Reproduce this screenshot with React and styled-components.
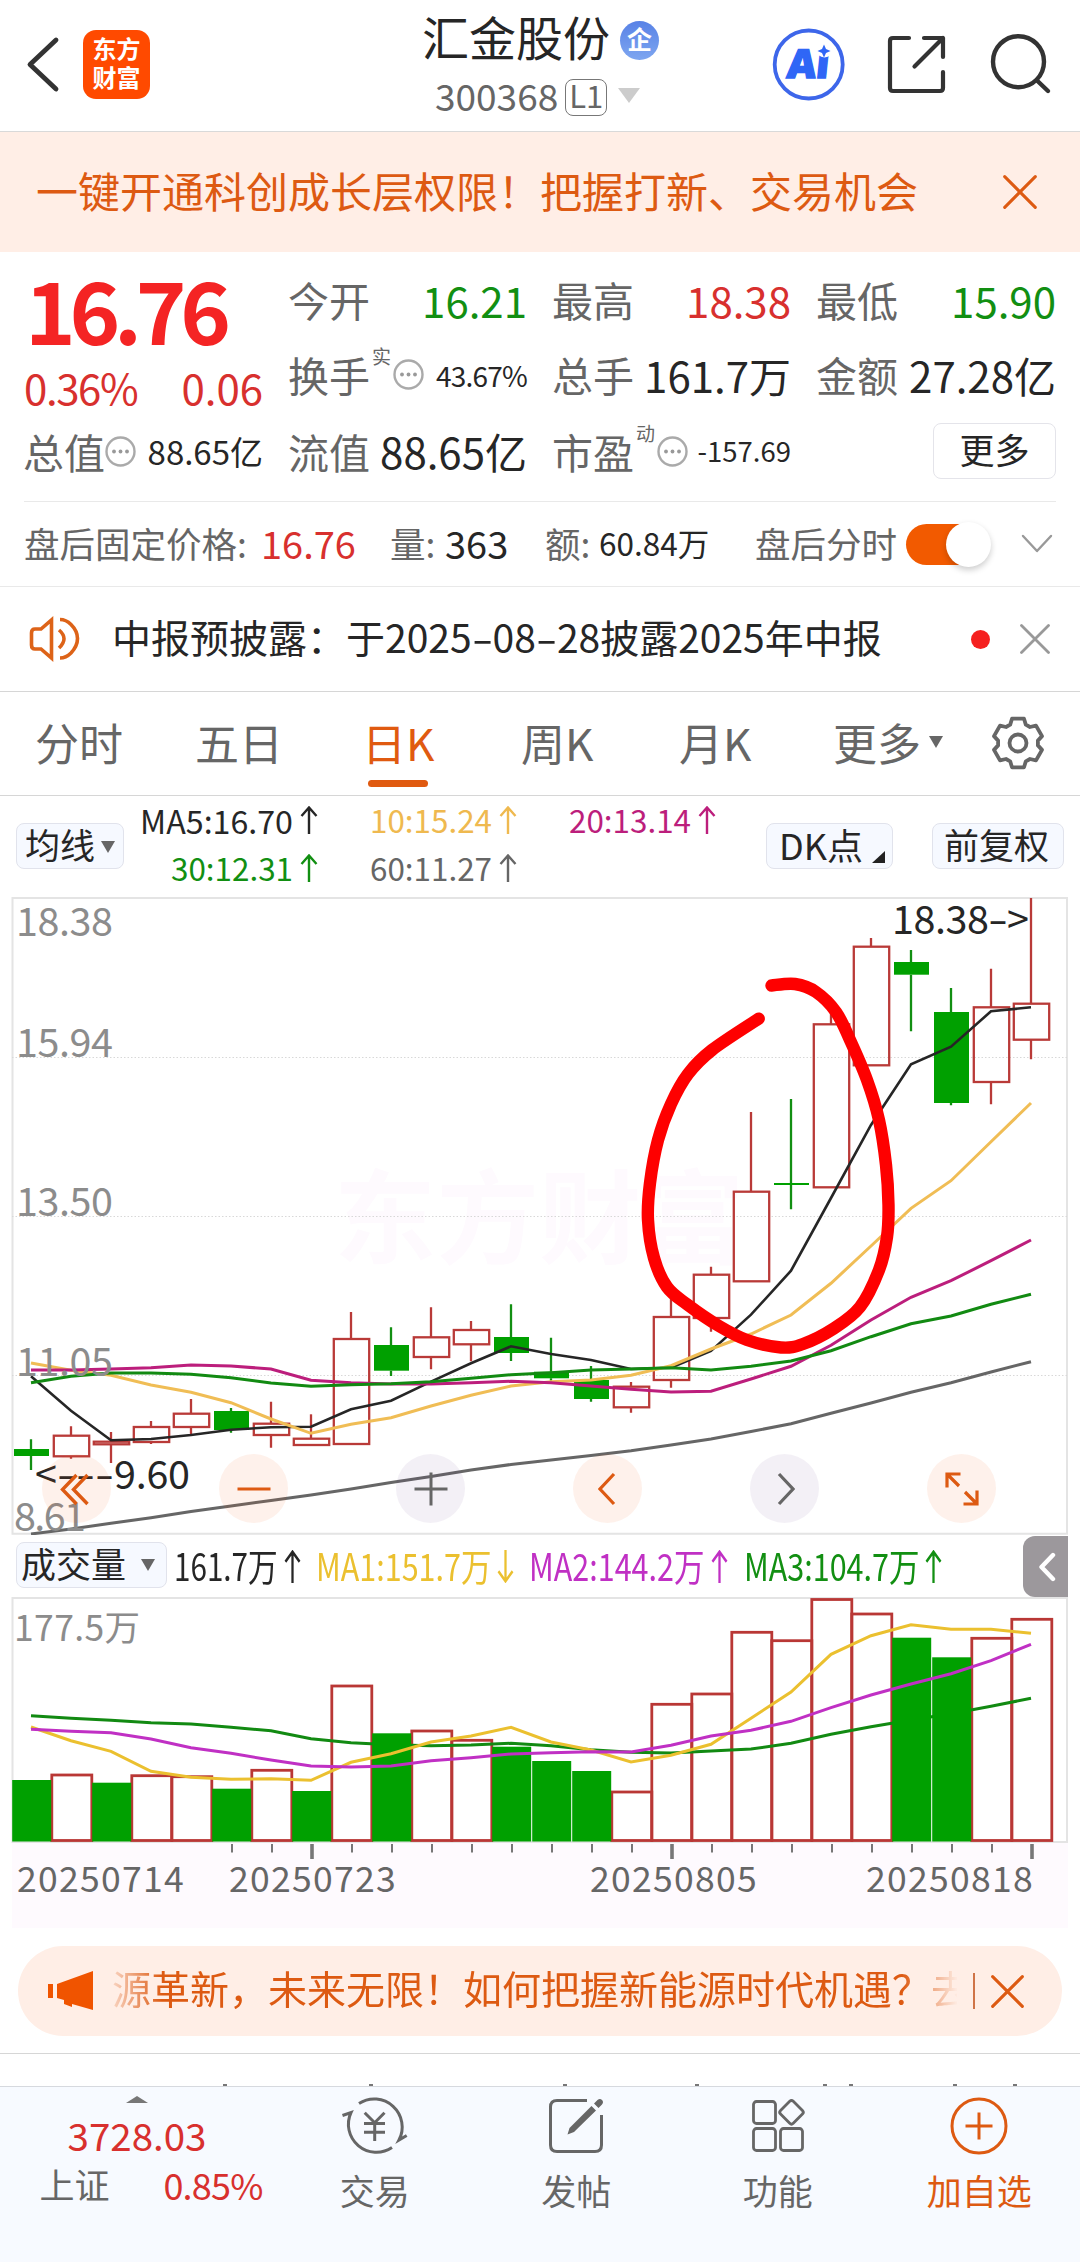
import React from "react";
import styled, { createGlobalStyle } from "styled-components";

const RED = "#d8302e";
const GREEN = "#128f12";
const ORANGE = "#dd5a12";
const GREY = "#666";
const DARK = "#262626";

const GlobalStyle = createGlobalStyle`
  * { box-sizing: border-box; }
  body {
    margin: 0;
    background: #fff;
    font-family: "Noto Sans CJK SC", sans-serif;
    color: ${DARK};
  }
  svg { display: block; flex: none; }
`;

const Page = styled.div`
  width: 1080px;
  height: 2262px;
  overflow: hidden;
`;

const Text = styled.span`
  white-space: nowrap;
  line-height: 1;
  font-size: ${p => p.$size || 42}px;
  color: ${p => p.$color || DARK};
  letter-spacing: ${p => p.$ls || 0}px;
`;

const Icon = styled.svg`
  fill: none;
  stroke: ${p => p.$color || "#333"};
  stroke-width: ${p => p.$width || 4};
  stroke-linecap: ${p => p.$cap || "round"};
  stroke-linejoin: ${p => (p.$cap === "butt" ? "miter" : "round")};
`;

const Cross = ({ size, color, width, className }) => (
  <Icon className={className} width={size} height={size} viewBox="0 0 30 30" $color={color} $width={width}>
    <path d="M1.5 1.5 28.5 28.5M28.5 1.5 1.5 28.5" />
  </Icon>
);

const Caret = styled.i`
  display: block;
  flex: none;
  margin: ${p => p.$top || 0}px 0 0 ${p => p.$left || 0}px;
  border: solid transparent;
  border-width: ${p => p.$h}px ${p => p.$w / 2}px 0;
  border-top-color: ${p => p.$color || GREY};
`;

/* ---------- header ---------- */

const Header = styled.header`
  height: 132px;
  display: grid;
  grid-template-columns: 84px 341px 347px 1fr;
  border-bottom: 1px solid #d9d9d9;
`;

const BackButton = styled.div`
  padding: 36px 0 0 25px;
`;

const Logo = styled.div`
  width: 67px;
  height: 69px;
  margin: 30px 0 0 -1px;
  padding-top: 3px;
  border-radius: 13px;
  background: #ff4a00;
  color: #fff;
  font-size: 24px;
  font-weight: 700;
  line-height: 29px;
  text-align: center;
`;

const TitleBlock = styled.div`
  padding-top: 10px;
`;

const TitleRow = styled.div`
  display: flex;
  align-items: center;
  height: 50px;
  margin-left: -3px;
`;

const CodeRow = styled.div`
  display: flex;
  align-items: center;
  height: 50px;
  margin-top: 10px;
  padding-left: 10px;
`;

const Badge = styled.span`
  width: 39px;
  height: 39px;
  margin: 11px 0 0 10px;
  border-radius: 50%;
  background: linear-gradient(#5882e6, #7ea6f0);
  color: #fff;
  font-size: 25px;
  font-weight: 700;
  line-height: 35px;
  text-align: center;
`;

const Level = styled.span`
  width: 42px;
  height: 37px;
  margin: 5px 11px 0 7px;
  border: 1.5px solid #777;
  border-radius: 8px;
  color: ${GREY};
  font-size: 31px;
  line-height: 30px;
  text-align: center;
`;

const Actions = styled.div`
  display: flex;
  padding-top: 28px;
`;

/* ---------- banner ---------- */

const Banner = styled.div`
  height: 120px;
  padding: 0 43px 4px 36px;
  display: flex;
  align-items: center;
  justify-content: space-between;
  background: #ffeee6;

  svg { margin-top: 3px; }
`;

/* ---------- quote ---------- */

const Quote = styled.section`
  height: 250px;
  margin: 0 24px;
  padding-top: 10px;
  display: grid;
  grid-template-columns: 239px 238px 238px 239px;
  grid-template-rows: 75px 75px 78px;
  column-gap: 26px;
  border-bottom: 1px solid #e9e9e9;
`;

const Cell = styled.div`
  display: flex;
  align-items: center;
  justify-content: space-between;
  padding-top: ${p => p.$drop || 0}px;
`;

const CellLabel = styled.span`
  display: flex;
  align-items: center;
  margin-left: -1px;
  color: ${GREY};
  font-size: 41px;
  line-height: 1;
  white-space: nowrap;
`;

const BigPrice = styled.span`
  margin-left: 1px;
  color: #f42424;
  font-size: 86px;
  font-weight: 700;
  letter-spacing: -6.2px;
  line-height: 1;
`;

const Mark = styled.sup`
  width: 20px;
  font-size: 19px;
  line-height: 20px;
  align-self: flex-start;
  margin: -8px 1px 0 2px;
  vertical-align: baseline;
`;

const MoreButton = styled.button`
  width: 123px;
  height: 56px;
  margin: 0 0 0 auto;
  padding: 0 0 5px;
  border: 1.5px solid #e4e4ea;
  border-radius: 8px;
  background: #fff;
  color: ${DARK};
  font: 35px/1 "Noto Sans CJK SC", sans-serif;
`;

const Dots = () => (
  <svg width="31" height="31" viewBox="0 0 31 31">
    <circle cx="15.5" cy="15.5" r="14" fill="none" stroke="#aaa" strokeWidth="2.4" />
    {[9, 15.5, 22].map(x => (
      <circle key={x} cx={x} cy="15.5" r="1.9" fill="#999" />
    ))}
  </svg>
);

const Field = ({ label, value, color, size, ls, mark, dots }) => (
  <Cell>
    <CellLabel>
      {label}
      {mark && <Mark>{mark}</Mark>}
      {dots && <Dots />}
    </CellLabel>
    <Text $size={size || 42} $color={color} $ls={ls}>
      {value}
    </Text>
  </Cell>
);

const AfterHours = styled.div`
  height: 85px;
  padding: 0 27px 3px 24px;
  display: grid;
  grid-template-columns: 237px 129px 55px 100px 54px 156px 151px 84px 1fr;
  align-items: center;
  border-bottom: 1px solid #e9e9e9;
`;

const Toggle = styled.div`
  width: 82px;
  height: 41px;
  margin-top: 3px;
  display: flex;
  align-items: center;
  justify-content: flex-end;
  border-radius: 21px;
  background: #f25a00;
`;

const Knob = styled.div`
  width: 45px;
  height: 45px;
  margin-right: -3px;
  flex: none;
  border-radius: 50%;
  background: #fff;
  box-shadow: 0 3px 6px rgba(0, 0, 0, 0.2);
`;

const Expand = styled(Icon)`
  justify-self: end;
`;

const Notice = styled.div`
  height: 105px;
  padding: 0 30px 0 29px;
  display: flex;
  align-items: center;
  border-bottom: 1px solid #d6d6d6;
`;

const NoticeText = styled(Text)`
  width: 859px;
  margin: -6px 0 0 31px;

  span {
    display: inline-block;
    width: 21px;
    text-align: center;
    transform: scaleX(1.6);
  }
`;

const RedDot = styled.i`
  width: 19px;
  height: 19px;
  margin-right: 30px;
  border-radius: 50%;
  background: #f5201f;
`;

/* ---------- tabs ---------- */

const Tabs = styled.nav`
  height: 104px;
  padding-left: 35px;
  display: grid;
  grid-template-columns: 160px 167px 159px 158px 154px 158px 1fr;
  border-bottom: 1px solid #d6d6d6;
`;

const Tab = styled.div`
  display: flex;
  align-items: center;
  padding-bottom: 4px;
  color: ${p => (p.$active ? "#e05a10" : GREY)};
  font-size: 44px;
  line-height: 1;
  position: relative;

  &::after {
    content: "";
    display: ${p => (p.$active ? "block" : "none")};
    position: absolute;
    left: 6px;
    bottom: 8px;
    width: 60px;
    height: 7px;
    border-radius: 4px;
    background: #e05a10;
  }

  svg { margin-top: 3px; }
`;

/* ---------- indicator rows ---------- */

const MaRow = styled.div`
  height: 101px;
  padding: 0 16px;
  display: grid;
  grid-template-columns: 124px 626px 166px 1fr;
`;

const Chip = styled.div`
  width: ${p => p.$w}px;
  height: 46px;
  margin-top: ${p => p.$top}px;
  padding: 0 0 5px ${p => p.$pad}px;
  display: flex;
  align-items: center;
  gap: ${p => p.$gap || 0}px;
  border: 1.5px solid #e1e3ec;
  border-radius: 8px;
  background: #f6f9ff;
  font-size: ${p => p.$size || 35}px;
  line-height: 1;
  white-space: nowrap;
`;

const Corner = styled.i`
  align-self: flex-end;
  border: solid transparent;
  border-width: 0 0 12px 13px;
  border-bottom-color: #222;
`;

const MaGrid = styled.div`
  display: grid;
  grid-template-columns: 178px 199px 199px;
  grid-template-rows: 48px 48px;
  align-items: center;
`;

const MaItem = styled.span`
  display: flex;
  align-items: center;
  justify-content: flex-end;
  gap: 7px;
  color: ${p => p.$color};
  font-size: ${p => p.$size || 31.4}px;
  line-height: 1;
  white-space: nowrap;
`;

const Arrow = ({ w = 18, h = 28, down }) => (
  <svg width={w} height={h} viewBox="0 0 18 28" preserveAspectRatio="none" fill="none" stroke="currentColor" strokeWidth="2.4">
    <path d={down ? "M9 0V26M1.5 18 9 26.5 16.5 18" : "M9 28V2M1.5 10 9 1.5 16.5 10"} />
  </svg>
);

const VolHead = styled.div`
  height: 62px;
  padding-left: 16px;
  display: grid;
  grid-template-columns: 158px 142px 213px 215px 279px 45px;
`;

const VolItem = styled.div`
  display: flex;
  align-items: center;
  padding-bottom: 3px;
  color: ${p => p.$color};

  svg { margin-top: 3px; }
`;

/* the figures of this row are set narrow */
const Narrow = styled.span`
  width: ${p => p.$w}px;
  font-size: 38px;
  line-height: 1;
  white-space: nowrap;
  transform: scaleX(${p => p.$x || 0.803});
  transform-origin: 0 50%;
`;

const Collapse = styled.div`
  height: 61px;
  margin-top: 1px;
  display: flex;
  align-items: center;
  padding-left: 15px;
  border-radius: 12px 0 0 12px;
  background: #9c989c;
`;

/* ---------- charts ---------- */

const ChartBox = styled.div`
  position: relative;
  height: 638px;
`;

const Controls = styled.div`
  position: absolute;
  left: 42px;
  bottom: 12px;
  display: flex;
  gap: 108px;
`;

const Control = styled.div`
  width: 69px;
  height: 69px;
  display: flex;
  align-items: center;
  justify-content: center;
  border-radius: 50%;
  background: ${p => (p.$grey ? "rgba(100, 60, 140, .075)" : "rgba(245, 90, 20, .085)")};
`;

// [up, high, top, bottom, low]
const CANDLES = [
  [0, 1439.3, 1449, 1456, 1470],
  [1, 1426.3, 1435.7, 1456.3, 1458.7],
  [1, 1432, 1441.7, 1444.3, 1463],
  [1, 1421, 1427, 1442, 1444],
  [1, 1399, 1413.7, 1427, 1434.7],
  [0, 1408, 1411, 1430, 1432.7],
  [1, 1401.7, 1423.7, 1435, 1447.7],
  [1, 1414.3, 1438.7, 1445, 1445],
  [1, 1312, 1339, 1444, 1444],
  [0, 1327.3, 1345, 1370.7, 1376],
  [1, 1307.3, 1337.3, 1357, 1369.3],
  [1, 1321, 1330, 1344.3, 1361.3],
  [0, 1304.3, 1337, 1353, 1361],
  [0, 1337.7, 1371.7, 1378.3, 1380.7],
  [0, 1366, 1380, 1399, 1401.7],
  [1, 1382, 1386.7, 1407.3, 1412.7],
  [1, 1295, 1317, 1380, 1387.7],
  [1, 1266.7, 1274.7, 1318, 1331.7],
  [1, 1112, 1191.7, 1281.3, 1281.3],
  [0, 1099, 1183, 1185, 1209.3],
  [1, 1002, 1024.3, 1187.3, 1187.3],
  [1, 938, 946.7, 1065.3, 1065.3],
  [0, 950, 962, 974.7, 1031.3],
  [0, 988, 1012, 1103, 1105.3],
  [1, 968.7, 1007.3, 1082, 1104.3],
  [1, 898, 1003.7, 1039.7, 1059.3]
];

const MA5 = [1376.3, 1410.7, 1440.3, 1439, 1435, 1429.7, 1427.3, 1426.7, 1409.3, 1400.7, 1381.7, 1363.3, 1346.3, 1354, 1360, 1369, 1367.7, 1351, 1314.7, 1270.7, 1198, 1125, 1064.3, 1046.7, 1011.3, 1007.3];
const MA10 = [1363, 1370.3, 1375.3, 1385, 1392.3, 1402.7, 1419, 1433.3, 1424.3, 1417.7, 1406, 1395.3, 1386, 1381.7, 1380, 1375.3, 1365.7, 1349, 1334, 1315, 1283.3, 1246, 1208.3, 1180.7, 1141.7, 1103];
const MA20 = [1370, 1370, 1369, 1367.7, 1365, 1366, 1369, 1380.3, 1382.7, 1384, 1384, 1382.7, 1381.3, 1382.7, 1386, 1389.3, 1392, 1391.3, 1379, 1366.3, 1345.3, 1320, 1297.3, 1280.7, 1260.7, 1240];
const MA30 = [1382.7, 1376.3, 1373, 1373, 1374.3, 1377.7, 1383, 1386.3, 1384.7, 1383.7, 1381.7, 1378.3, 1374.7, 1372.7, 1370, 1369, 1367.7, 1370, 1366.3, 1361, 1350.7, 1336.7, 1323.7, 1316, 1304.3, 1294.3];
const MA60 = [1534, 1529, 1523.3, 1517.7, 1511.5, 1506, 1500.5, 1495, 1489, 1482.5, 1476.5, 1470, 1464.5, 1460, 1455.5, 1450.7, 1445, 1439, 1431.5, 1423.7, 1413.3, 1403, 1392.3, 1382.7, 1372, 1361.7];

// [up, top]
const VOLUMES = [
  [0, 1780], [1, 1775], [0, 1782.7], [1, 1775.7], [1, 1776.7], [0, 1788.7], [1, 1770.3], [0, 1791], [1, 1686],
  [0, 1733.3], [1, 1731], [1, 1740.3], [0, 1746.7], [0, 1761], [0, 1771], [1, 1792], [1, 1704.3], [1, 1694],
  [1, 1632.3], [1, 1640.7], [1, 1599.5], [1, 1614], [0, 1637.7], [0, 1657.3], [1, 1638.3], [1, 1619.3]
];
const VMA1 = [1727, 1740.7, 1751.3, 1771.3, 1777.3, 1779.3, 1778.7, 1780.3, 1762.3, 1753.7, 1742, 1736, 1727.3, 1742, 1750, 1762, 1755.3, 1744.3, 1718.3, 1692, 1654.3, 1635.7, 1624.7, 1629.3, 1629.3, 1633.3];
const VMA2 = [1729.3, 1731.3, 1732.7, 1739, 1747.7, 1753.3, 1760, 1766, 1767, 1766, 1760.7, 1757.7, 1754, 1752.7, 1751.7, 1752, 1745.3, 1736, 1730.3, 1721.3, 1707.7, 1695, 1684, 1673.7, 1660.7, 1644.3];
const VMA3 = [1715.7, 1718.3, 1720.3, 1722.7, 1724, 1727.3, 1730.7, 1738.7, 1742.7, 1744.7, 1745.7, 1745, 1743.3, 1745.7, 1749.7, 1752.3, 1753, 1751, 1749, 1743.3, 1734.3, 1726.7, 1720, 1713.7, 1706.3, 1698.3];

const SCRIBBLE = [
  [758.7, 1018.7], [712, 1050], [688, 1074], [671, 1104], [658, 1140], [650, 1183], [648, 1220], [654, 1258],
  [667, 1287], [688, 1305], [719, 1326], [747, 1340], [781, 1347.5], [803, 1344], [833, 1329], [860, 1307],
  [879, 1270], [887, 1237], [888.5, 1205], [886, 1165], [879, 1120], [867, 1080], [850, 1040], [836, 1012],
  [816, 992], [795, 984], [771.5, 985.5]
];

const smooth = pts => {
  let d = `M${pts[0]}`;
  for (let i = 0; i < pts.length - 1; i++) {
    const p0 = pts[i - 1] || pts[i];
    const p1 = pts[i];
    const p2 = pts[i + 1];
    const p3 = pts[i + 2] || p2;
    d += `C${p1[0] + (p2[0] - p0[0]) / 6} ${p1[1] + (p2[1] - p0[1]) / 6} ${p2[0] - (p3[0] - p1[0]) / 6} ${p2[1] - (p3[1] - p1[1]) / 6} ${p2}`;
  }
  return d;
};

const Line = ({ ys, color, width = 3 }) => (
  <polyline points={ys.map((y, i) => `${31 + i * 40},${y}`).join(" ")} fill="none" stroke={color} strokeWidth={width} />
);

const Candle = ({ i, data: [up, high, top, bottom, low] }) => {
  const x = 31 + i * 40;
  const color = up ? "#b93a38" : GREEN;
  return (
    <g stroke={color} strokeWidth="2.3">
      <path d={`M${x} ${high}V${top}M${x} ${bottom}V${low}`} />
      {up ? (
        <rect x={x - 17.2} y={top} width="35.4" height={bottom - top} fill="none" />
      ) : (
        <rect x={x - 17} y={top} width="35" height={bottom - top} fill="#00a000" stroke="none" />
      )}
    </g>
  );
};

const PRICE_LABELS = [["18.38", 936], ["15.94", 1057], ["13.50", 1216], ["11.05", 1375.5]];

const PriceChart = () => (
  <svg width="1080" height="638" viewBox="0 897 1080 638">
    <text x="334" y="1256" fontSize="102" fontWeight="700" fill="#fefafe" textLength="410">东方财富</text>
    <path d="M12.5 898H1067V1533.7H12.5Z" fill="none" stroke="#e4e4e4" strokeWidth="2" />
    {[1057.5, 1216.5, 1375.5].map(y => (
      <path key={y} d={`M12 ${y}H1067`} stroke="#d8d8d8" strokeDasharray="1.5 2" />
    ))}
    {CANDLES.map((c, i) => (
      <Candle key={i} i={i} data={c} />
    ))}
    <Line ys={MA5} color="#262626" width={2.6} />
    <Line ys={MA10} color="#f0bd55" />
    <Line ys={MA20} color="#bc1e7c" />
    <Line ys={MA30} color="#128a12" />
    <Line ys={MA60} color="#666" />
    <g fontSize="39.5" fill="#8c8c8c">
      {PRICE_LABELS.map(([t, y]) => (
        <text key={t} x="16" y={y} textLength="97">{t}</text>
      ))}
      <text x="14" y="1531" textLength="72">8.61</text>
    </g>
    <g fontSize="39.5" fill={DARK}>
      <text x="892" y="934" textLength="97">18.38</text>
      <text x="988" y="934" textLength="20" lengthAdjust="spacingAndGlyphs">-</text>
      <text x="1007" y="934">&gt;</text>
      <text x="35" y="1489">&lt;</text>
      <text x="57" y="1489" textLength="57" lengthAdjust="spacingAndGlyphs">---</text>
      <text x="114" y="1489" textLength="76">9.60</text>
    </g>
    <path d={smooth(SCRIBBLE)} fill="none" stroke="#fe0000" strokeWidth="12.4" strokeLinecap="round" />
  </svg>
);

const VolumeChart = () => (
  <svg width="1080" height="246" viewBox="0 1597 1080 246">
    <path d="M12.5 1598H1067V1842H12.5Z" fill="none" stroke="#e4e4e4" strokeWidth="2" />
    <text x="14" y="1640.5" fontSize="35.5" fill="#8c8c8c" textLength="126">177.5万</text>
    {VOLUMES.map(([up, y], i) =>
      up ? <rect key={i} x={11.8 + i * 40} y={y} width="40" height={1840.5 - y} fill="none" stroke="#b93735" strokeWidth="2.8" /> : null
    )}
    <Line ys={VMA3} color="#128a12" />
    {VOLUMES.map(([up, y], i) => (up ? null : <rect key={i} x={12.2 + i * 40} y={y} width="39" height={1841.5 - y} fill="#00a000" />))}
    <Line ys={VMA1} color="#ebc02f" />
    <Line ys={VMA2} color="#c030c4" />
  </svg>
);

const Axis = styled.div`
  height: 85px;
  margin: 0 12px;
  background: #fefafe;
`;

const Dates = styled.div`
  display: grid;
  grid-template-columns: 212px 361px 276px 1fr;
  padding: 1px 0 0 5px;
  color: ${GREY};
  font-size: 35.5px;
  letter-spacing: 1.3px;
  line-height: 32px;
`;

/* ---------- promo ---------- */

const PromoWrap = styled.div`
  height: 126px;
  padding: 18px 18px 0;
  border-bottom: 1px solid #d6d6d6;
`;

const Promo = styled.div`
  height: 90px;
  padding: 0 38px 0 29px;
  display: flex;
  align-items: center;
  border-radius: 45px;
  background: #ffeee6;
`;

const Marquee = styled.div`
  width: 847px;
  height: 56px;
  margin: -8px 0 0 18px;
  overflow: hidden;
  color: ${ORANGE};
  font-size: 39px;
  line-height: 56px;
  white-space: nowrap;
  mask-image: linear-gradient(90deg, transparent -10px, #000 50px, #000 790px, transparent 846px);
`;

const Bar = styled.i`
  width: 2px;
  height: 36px;
  margin: 0 16px 0 16px;
  background: #cf7448;
`;

const Peek = styled.div`
  height: 32px;
  display: flex;
  align-items: flex-end;
`;

/* ---------- bottom nav ---------- */

const Nav = styled.nav`
  height: 176px;
  display: grid;
  grid-template-columns: 274px repeat(4, 201.5px);
  border-top: 1px solid #d6d9de;
  background: #f7faff;
`;

const IndexCell = styled.div`
  display: flex;
  flex-direction: column;
  align-items: center;
  gap: 12px;
  padding-top: 9px;
`;

const UpCaret = styled(Caret)`
  transform: rotate(180deg);
`;

const IndexRow = styled.div`
  width: 223px;
  margin-left: 28px;
  display: flex;
  align-items: center;
  justify-content: space-between;
`;

const NavItem = styled.div`
  display: flex;
  flex-direction: column;
  align-items: center;
  gap: 13px;
  padding-top: 8px;
  color: ${p => p.$color || GREY};
  font-size: 35px;
  line-height: 40px;
`;

const gearPath = () => {
  const pts = [];
  for (let k = 0; k < 6; k++) {
    [[-23, 20], [-14, 25], [14, 25], [23, 20]].forEach(([a, r]) => {
      const t = ((k * 60 + a - 90) * Math.PI) / 180;
      pts.push(`${(27 + r * Math.cos(t)).toFixed(1)} ${(27 + r * Math.sin(t)).toFixed(1)}`);
    });
  }
  return `M${pts.join("L")}Z`;
};

const App = () => (
  <Page>
    <GlobalStyle />
    <Header>
      <BackButton>
        <Icon width="36" height="58" viewBox="0 0 36 58" $width={4.8}>
          <path d="M31 4 5 28.5 31 53" />
        </Icon>
      </BackButton>
      <Logo>
        东方
        <br />
        财富
      </Logo>
      <TitleBlock>
        <TitleRow>
          <Text $size={47}>汇金股份</Text>
          <Badge>企</Badge>
        </TitleRow>
        <CodeRow>
          <Text $size={37} $color={GREY}>300368</Text>
          <Level>L1</Level>
          <Caret $w={22} $h={15} $color="#ccc" />
        </CodeRow>
      </TitleBlock>
      <Actions>
        <svg width="114" height="74" viewBox="772 28 114 74">
          <circle cx="808.7" cy="64.5" r="34" fill="none" stroke="#3d66ea" strokeWidth="3.8" />
          <g transform="translate(786 77.5) skewX(-6)">
            <text fontSize="40" fontFamily="Open Sans" fontWeight="800" fill="#2f66f6" stroke="#2f66f6" strokeWidth="1.4" textLength="42">Ai</text>
          </g>
          <circle cx="824.5" cy="49" r="8.5" fill="#fff" />
          <path d="M824 44.500l2 4.500 4.500 2-4.500 2-2 4.500-2-4.500-4.500-2 4.500-2z" fill="#2f66f6" />
        </svg>
        <Icon width="100" height="74" viewBox="886 28 100 74" $width={4.2}>
          <path d="M909 38H893Q890 38 890 41V88Q890 91 893 91H940Q943 91 943 88V72M924 38H943V57M943 38 914.5 66.5" />
        </Icon>
        <Icon width="72" height="74" viewBox="986 28 72 74" $width={4.4}>
          <circle cx="1018.5" cy="61.7" r="25.5" />
          <path d="M1037 80.5 1048 91" />
        </Icon>
      </Actions>
    </Header>

    <Banner>
      <Text $color={ORANGE}>一键开通科创成长层权限！把握打新、交易机会</Text>
      <Cross size={34} color={ORANGE} width={2.7} />
    </Banner>

    <Quote>
      <Cell $drop={17}>
        <BigPrice>16.76</BigPrice>
      </Cell>
      <Field label="今开" value="16.21" color={GREEN} />
      <Field label="最高" value="18.38" color={RED} />
      <Field label="最低" value="15.90" color={GREEN} />
      <Cell $drop={25}>
        <Text $color={RED} $ls={-1.4}>0.36%</Text>
        <Text $color={RED}>0.06</Text>
      </Cell>
      <Field label="换手" value="43.67%" size={28} ls={-0.8} mark="实" dots />
      <Field label="总手" value="161.7万" />
      <Field label="金额" value="27.28亿" />
      <Field label="总值" value="88.65亿" size={33} dots />
      <Field label="流值" value="88.65亿" />
      <Field label="市盈" value="-157.69" size={27.5} mark="动" dots />
      <Cell>
        <MoreButton>更多</MoreButton>
      </Cell>
    </Quote>

    <AfterHours>
      <Text $size={35.5} $color={GREY}>盘后固定价格:</Text>
      <Text $size={38} $color={RED}>16.76</Text>
      <Text $size={35.5} $color={GREY}>量:</Text>
      <Text $size={38}>363</Text>
      <Text $size={35.5} $color={GREY}>额:</Text>
      <Text $size={31.5}>60.84万</Text>
      <Text $size={35.5} $color={GREY}>盘后分时</Text>
      <Toggle>
        <Knob />
      </Toggle>
      <Expand width="32" height="20" viewBox="0 0 32 20" $color="#999" $width={2.4}>
        <path d="M2 3 16 18 30 3" />
      </Expand>
    </AfterHours>

    <Notice>
      <Icon width="52" height="46" viewBox="29 616 52 46" $color="#dd6318" $width={3.6} $cap="butt">
        <path d="M51.5 620V658L41 649H35Q31.500 649 31.500 645V633Q31.500 629 35 629H41ZM59 630Q69 638.500 59 648M60 619.500Q66 619.500 71 624.500 77.500 631 77.500 638.500 77.500 646 71 653 66 658 60 658" />
      </Icon>
      <NoticeText $size={39}>
        中报预披露：于2025<span>-</span>08<span>-</span>28披露2025年中报
      </NoticeText>
      <RedDot />
      <Cross size={30} color="#999" width={2.8} />
    </Notice>

    <Tabs>
      <Tab>分时</Tab>
      <Tab>五日</Tab>
      <Tab $active>日K</Tab>
      <Tab>周K</Tab>
      <Tab>月K</Tab>
      <Tab>
        更多
        <Caret $w={15} $h={12} $left={8} />
      </Tab>
      <Tab>
        <Icon width="54" height="54" viewBox="0 0 54 54" $color={GREY} $width={3.8}>
          <path d={gearPath()} />
          <circle cx="27" cy="27" r="8.500" />
        </Icon>
      </Tab>
    </Tabs>

    <MaRow>
      <Chip $w={108} $top={27} $pad={8} $gap={6}>
        均线
        <Caret $w={14} $h={12} $top={7} />
      </Chip>
      <MaGrid>
        <MaItem $color={DARK} $size={32.2}>MA5:16.70<Arrow /></MaItem>
        <MaItem $color="#efb94f">10:15.24<Arrow /></MaItem>
        <MaItem $color="#bc1e7c">20:13.14<Arrow /></MaItem>
        <MaItem $color={GREEN}>30:12.31<Arrow /></MaItem>
        <MaItem $color={GREY}>60:11.27<Arrow /></MaItem>
      </MaGrid>
      <Chip $w={127} $top={27} $pad={12} $gap={9} $size={36}>
        DK点
        <Corner />
      </Chip>
      <Chip $w={132} $top={27} $pad={11}>前复权</Chip>
    </MaRow>

    <ChartBox>
      <PriceChart />
      <Controls>
        <Control>
          <Icon width="40" height="36" viewBox="56 1470 40 36" $color={ORANGE} $width={3.4} $cap="butt">
            <path d="M75.500 1474 61.500 1488.500 75.500 1503M86.500 1474 72.500 1488.500 86.500 1503" />
          </Icon>
        </Control>
        <Control>
          <Icon width="34" height="34" viewBox="0 0 34 34" $color={ORANGE} $width={3.2} $cap="butt">
            <path d="M0.500 17H33.500" />
          </Icon>
        </Control>
        <Control $grey>
          <Icon width="34" height="34" viewBox="0 0 34 34" $color={GREY} $width={3} $cap="butt">
            <path d="M0.500 17H33.500M17 0.500V33.500" />
          </Icon>
        </Control>
        <Control>
          <Icon width="20" height="34" viewBox="0 0 20 34" $color={ORANGE} $width={3.2} $cap="butt">
            <path d="M16 2 2 17 16 32" />
          </Icon>
        </Control>
        <Control $grey>
          <Icon width="20" height="34" viewBox="0 0 20 34" $color={GREY} $width={3.2} $cap="butt">
            <path d="M4 2 18 17 4 32" />
          </Icon>
        </Control>
        <Control>
          <Icon width="34" height="34" viewBox="0 0 34 34" $color={ORANGE} $width={3.2} $cap="butt">
            <path d="M2 15.500V2H15.500M2 2 14 14M20 20 32 32M32 18.500V32H18.500" />
          </Icon>
        </Control>
      </Controls>
    </ChartBox>

    <VolHead>
      <Chip $w={151} $top={7} $pad={4} $gap={15}>
        成交量
        <Caret $w={15} $h={12} $top={5} />
      </Chip>
      <VolItem $color={DARK}>
        <Narrow $w={110} $x={0.78}>161.7万</Narrow>
        <Arrow w={17} h={33} />
      </VolItem>
      <VolItem $color="#ebc02f">
        <Narrow $w={181}>MA1:151.7万</Narrow>
        <Arrow w={17} h={33} down />
      </VolItem>
      <VolItem $color="#c030c4">
        <Narrow $w={182}>MA2:144.2万</Narrow>
        <Arrow w={17} h={33} />
      </VolItem>
      <VolItem $color={GREEN}>
        <Narrow $w={181}>MA3:104.7万</Narrow>
        <Arrow w={17} h={33} />
      </VolItem>
      <Collapse>
        <Icon width="18" height="30" viewBox="0 0 18 30" $color="#fff" $width={4.4}>
          <path d="M15 3 3.500 15 15 27" />
        </Icon>
      </Collapse>
    </VolHead>

    <VolumeChart />
    <Axis>
      <svg width="1056" height="17" viewBox="12 1843 1056 17">
        {VOLUMES.map((v, i) => {
          const major = [7, 16, 25].includes(i);
          return i < 5 ? null : (
            <path key={i} d={`M${32 + i * 40} 1844V${major ? 1859 : 1852.5}`} stroke="#777" strokeWidth={major ? 3.6 : 2} />
          );
        })}
      </svg>
      <Dates>
        <span>20250714</span>
        <span>20250723</span>
        <span>20250805</span>
        <span>20250818</span>
      </Dates>
    </Axis>

    <PromoWrap>
      <Promo>
        <svg width="47" height="40" viewBox="47 1971 47 40" fill="#f05400">
          <path d="M48 1984H53V1998H48ZM57 1984 93 1971V2010L72 2004V2007L64 2004V2000L57 1998Z" />
        </svg>
        <Marquee>源革新，未来无限！如何把握新能源时代机遇？去</Marquee>
        <Bar />
        <Cross size={33} color={ORANGE} width={2.8} />
      </Promo>
    </PromoWrap>
    <Peek>
      <svg width="1080" height="3" viewBox="0 0 1080 3" fill="#777">
        {[223, 369, 563, 695, 823, 849, 953, 1013].map(x => (
          <rect key={x} x={x} y="1" width="4" height="2" />
        ))}
      </svg>
    </Peek>

    <Nav>
      <IndexCell>
        <UpCaret $w={22} $h={7} $color="#777" />
        <Text $size={38.5} $color={RED}>3728.03</Text>
        <IndexRow>
          <Text $size={35} $color={GREY}>上证</Text>
          <Text $size={36} $color={RED} $ls={-0.8}>0.85%</Text>
        </IndexRow>
      </IndexCell>
      <NavItem>
        <Icon width="70" height="62" viewBox="341 2095 70 62" $color={GREY} $width={3} $cap="butt">
          <path d="M360 2103.500A28 28 0 0 1 400 2140L407.700 2135.500M393 2147.500A28 28 0 0 1 352 2112.500L343.500 2115.500" />
          <path d="M365.700 2112.700 375.700 2122.700 385.500 2112.700M365 2123.500H386M365 2132.300H386M375.700 2122V2141" />
        </Icon>
        交易
      </NavItem>
      <NavItem>
        <Icon width="62" height="62" viewBox="546 2095 62 62" $color={GREY} $width={3} $cap="butt">
          <path d="M588 2100.500H558Q551.500 2100.500 551.500 2107V2145Q551.500 2151.500 558 2151.500H596Q602.500 2151.500 602.500 2145V2115" />
          <path d="M568.500 2134.500 570.500 2128 592.500 2106 597 2110.500 575 2132ZM595 2103.500 598.500 2100Q601 2098 603 2100 605 2102 603 2104.500L599.500 2108Z" fill={GREY} stroke="none" />
        </Icon>
        发帖
      </NavItem>
      <NavItem>
        <Icon width="62" height="62" viewBox="747 2095 62 62" $color={GREY} $width={2.8}>
          <rect x="753.500" y="2101.500" width="22" height="22" rx="3" />
          <rect x="753.500" y="2128.500" width="22" height="22" rx="3" />
          <rect x="780.500" y="2128.500" width="22" height="22" rx="3" />
          <rect x="782.500" y="2103.300" width="18" height="18" rx="2.500" transform="rotate(45 791.500 2112.300)" />
        </Icon>
        功能
      </NavItem>
      <NavItem $color={ORANGE}>
        <Icon width="62" height="62" viewBox="948 2095 62 62" $color={ORANGE} $width={3} $cap="butt">
          <circle cx="979" cy="2126" r="27" />
          <path d="M965.500 2126H992.500M979 2112.500V2139.500" />
        </Icon>
        加自选
      </NavItem>
    </Nav>
  </Page>
);

export default App;
